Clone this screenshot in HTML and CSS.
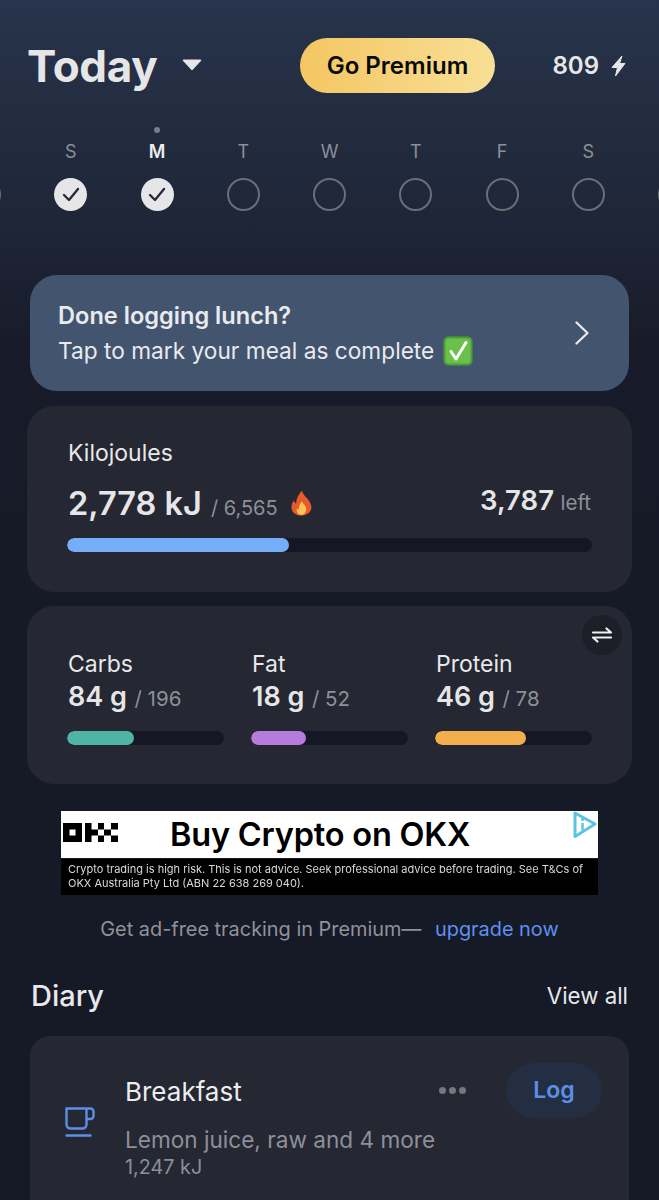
FILE: index.html
```html
<!DOCTYPE html>
<html lang="en">
<head>
<meta charset="utf-8">
<title>Today</title>
<link rel="stylesheet" href="styles.css">
</head>
<body>
<div class="page">
  <header class="top">
    <div class="title-wrap">
      <h1 class="title">Today</h1>
      <svg class="caret" width="20" height="13" viewBox="0 0 20 13"><path d="M1.500 1.500h17a.8.8 0 0 1 .6 1.300l-8.400 9a1 1 0 0 1-1.400 0l-8.400-9a.8.8 0 0 1 .6-1.300z" fill="#e6e6e8"/></svg>
    </div>
    <div class="premium">Go Premium</div>
    <div class="streak">
      <span>809</span>
      <svg width="15" height="22" viewBox="0 0 15 22"><path d="M11 1 1 12.500h5.500L4.500 21 14 8.500H8.500z" fill="#e6e6e8" stroke="#e6e6e8" stroke-width="1" stroke-linejoin="round"/></svg>
    </div>
  </header>

  <div class="week">
    <div class="day"><span class="dot-slot"></span><span class="letter"></span><span class="ring"></span></div>
    <div class="day"><span class="dot-slot"></span><span class="letter">S</span><span class="ring done"><svg width="18" height="15" viewBox="0 0 18 15"><path d="M2 8l5 5 9-11" fill="none" stroke="#252a38" stroke-width="2.300" stroke-linecap="round" stroke-linejoin="round"/></svg></span></div>
    <div class="day"><span class="dot-slot"><i class="today-dot"></i></span><span class="letter current">M</span><span class="ring done"><svg width="18" height="15" viewBox="0 0 18 15"><path d="M2 8l5 5 9-11" fill="none" stroke="#252a38" stroke-width="2.300" stroke-linecap="round" stroke-linejoin="round"/></svg></span></div>
    <div class="day"><span class="dot-slot"></span><span class="letter">T</span><span class="ring"></span></div>
    <div class="day"><span class="dot-slot"></span><span class="letter">W</span><span class="ring"></span></div>
    <div class="day"><span class="dot-slot"></span><span class="letter">T</span><span class="ring"></span></div>
    <div class="day"><span class="dot-slot"></span><span class="letter">F</span><span class="ring"></span></div>
    <div class="day"><span class="dot-slot"></span><span class="letter">S</span><span class="ring"></span></div>
    <div class="day"><span class="dot-slot"></span><span class="letter"></span><span class="ring"></span></div>
  </div>

  <section class="banner">
    <div>
      <div class="banner-title">Done logging lunch?</div>
      <div class="banner-sub">Tap to mark your meal as complete
        <svg class="check-emoji" width="30" height="30" viewBox="0 0 30 30"><rect x=".5" y=".5" width="29" height="29" rx="5" fill="#4f9f36"/><rect x="2.500" y="2.500" width="25" height="25" rx="3.500" fill="#69c04a"/><path d="M8 15.500l5 7.500L23 6.500" fill="none" stroke="#fff" stroke-width="3" stroke-linecap="round" stroke-linejoin="round"/></svg>
      </div>
    </div>
    <svg width="16" height="24" viewBox="0 0 16 24"><path d="M2.500 1.500 13.500 12 2.500 22.500" fill="none" stroke="#e8eaee" stroke-width="2.300" stroke-linecap="round" stroke-linejoin="round"/></svg>
  </section>

  <section class="card kj">
    <div class="label">Kilojoules</div>
    <div class="kj-row">
      <div class="kj-main">
        <span class="big">2,778 kJ</span>
        <span class="of">/ 6,565</span>
        <svg class="flame" width="23" height="26" viewBox="0 0 23 26"><path d="M12 .5c1 4.500 4 6 6.500 9.500 2.500 3.500 3.500 6.500 2.500 9.500-1 3.500-5 6-9.500 6S3 23.500 1.800 19.500C.8 15.500 2.500 12.500 4 10.500c.3 1.500 1 2.500 2.200 3C6 9 8.500 4.500 12 .5z" fill="#ea5a28"/><path d="M12 11c.5 2.500 2.500 3.500 3.800 6 1.200 3-.5 8-4.300 8s-5.500-4-4.500-7c.4 1 1 1.500 1.800 1.700C8.500 17 10 14 12 11z" fill="#fbc45a"/></svg>
      </div>
      <div class="kj-left"><span class="left-num">3,787</span> <span class="left-word">left</span></div>
    </div>
    <div class="track kj-track"><div class="fill" style="width:42.300%"></div></div>
  </section>

  <section class="card macros">
    <button class="swap" aria-label="Swap">
      <svg width="24" height="16" viewBox="0 0 24 16"><path d="M3 5.500h18L16.500 1.500M21 10.500H3l4.500 4" fill="none" stroke="#f0f0f2" stroke-width="2.200" stroke-linecap="round" stroke-linejoin="round"/></svg>
    </button>
    <div class="macro">
      <div class="label">Carbs</div>
      <div class="macro-val"><span class="mid">84 g</span> <span class="of">/ 196</span></div>
      <div class="track"><div class="fill teal" style="width:42.700%"></div></div>
    </div>
    <div class="macro">
      <div class="label">Fat</div>
      <div class="macro-val"><span class="mid">18 g</span> <span class="of">/ 52</span></div>
      <div class="track"><div class="fill purple" style="width:35%"></div></div>
    </div>
    <div class="macro">
      <div class="label">Protein</div>
      <div class="macro-val"><span class="mid">46 g</span> <span class="of">/ 78</span></div>
      <div class="track"><div class="fill orange" style="width:58%"></div></div>
    </div>
  </section>

  <aside class="ad">
    <div class="ad-top">
      <svg class="okx" width="55" height="20" viewBox="0 0 55 20"><path d="M0 0h19v19H0zM6.500 6.500v6h6v-6zM22 0h6.500v6.500H22zM22 6.500h6.500v6H22zM22 12.500h6.500V19H22zM28.500 6.500H35v6h-6.500zM35 0h6v6.500h-6zM35 12.500h6V19h-6zM41 6.500h7v6h-7zM48 0h7v6.500h-7zM48 12.500h7V19h-7z" fill="#000" fill-rule="evenodd"/></svg>
      <span class="ad-head">Buy Crypto on OKX</span>
      <svg class="ad-choice" width="24" height="28" viewBox="0 0 24 28"><path d="M2 2 22 13 2 25.500z" fill="none" stroke="#5cc3e3" stroke-width="3" stroke-linejoin="round"/><path d="M9.500 12v7" stroke="#5cc3e3" stroke-width="2.500"/><circle cx="9.500" cy="8.500" r="1.500" fill="#5cc3e3"/></svg>
    </div>
    <div class="ad-legal">Crypto trading is high risk. This is not advice. Seek professional advice before trading. See T&amp;Cs of OKX Australia Pty Ltd (ABN 22 638 269 040).</div>
  </aside>

  <p class="upsell">Get ad-free tracking in Premium— <a class="upgrade">upgrade now</a></p>

  <div class="diary-head">
    <h2>Diary</h2>
    <span>View all</span>
  </div>

  <section class="meal">
    <svg class="cup" width="30" height="30" viewBox="0 0 30 30"><path d="M1.500 1.500h20v16a4 4 0 0 1-4 4h-12a4 4 0 0 1-4-4zM21.500 1.500h4a3 3 0 0 1 3 3v4.500a3 3 0 0 1-3 3h-4M1.500 28.500h24" fill="none" stroke="#5d8fe6" stroke-width="2.400" stroke-linecap="round" stroke-linejoin="round"/></svg>
    <div class="meal-body">
      <div class="meal-top">
        <span class="meal-name">Breakfast</span>
        <span class="dots"><i></i><i></i><i></i></span>
        <span class="log">Log</span>
      </div>
      <div class="meal-items">Lemon juice, raw and 4 more</div>
      <div class="meal-kj">1,247 kJ</div>
    </div>
  </section>
</div>
</body>
</html>
```
FILE: styles.css
```css
* { box-sizing: border-box; }
html, body { margin: 0; height: 100%; }
body {
  background: #171a26;
  font-family: Inter, "Liberation Sans", sans-serif;
  color: #e6e6e8;
  overflow: hidden;
}
.page {
  height: 1200px;
  overflow: hidden;
  padding-top: 38px;
  background: linear-gradient(180deg, #27344b 0, #222c40 130px, #1e2536 230px, #181c2a 340px, #161926 600px);
}
.top {
  display: flex;
  align-items: center;
  height: 55px;
  padding: 0 33px 0 27px;
}
.title-wrap { display: flex; align-items: center; gap: 25px; width: 273px; }
.title { margin: 2px 0 0; font-size: 44px; font-weight: 700; line-height: 55px; letter-spacing: -0.3px; }
.caret { flex: none; margin-top: -2px; }
.premium {
  width: 195px;
  height: 55px;
  border-radius: 28px;
  background: linear-gradient(90deg, #f4c662, #f8df96);
  color: #0a0a0a;
  font-size: 24px;
  font-weight: 600;
  line-height: 55px;
  text-align: center;
}
.streak {
  margin-left: auto;
  display: flex;
  align-items: center;
  gap: 12px;
  font-size: 24px;
  font-weight: 600;
}
.week {
  display: flex;
  justify-content: center;
  margin-top: 34px;
  overflow: hidden;
}
.day {
  flex: 0 0 86.25px;
  display: flex;
  flex-direction: column;
  align-items: center;
}
.dot-slot { height: 8px; display: flex; justify-content: center; }
.today-dot { width: 6px; height: 6px; border-radius: 50%; background: #7b7e86; }
.letter {
  margin-top: 6px;
  height: 22px;
  font-size: 18px;
  line-height: 22px;
  color: #8d9098;
}
.letter.current { color: #eceded; font-weight: 600; }
.ring {
  margin-top: 15px;
  width: 33px;
  height: 33px;
  border-radius: 50%;
  border: 2.500px solid #6a6e76;
  display: flex;
  align-items: center;
  justify-content: center;
}
.ring.done { border: 0; background: #e6e6e8; }
.banner {
  margin: 64px 30px 0;
  height: 116px;
  padding: 0 39px 0 28px;
  border-radius: 27px;
  background: #43546f;
  display: flex;
  align-items: center;
  justify-content: space-between;
}
.banner-title { font-size: 23.600px; font-weight: 600; line-height: 30px; color: #e8eaee; }
.banner-sub {
  display: flex;
  align-items: center;
  gap: 9px;
  margin-top: 5px;
  font-size: 22.700px;
  line-height: 30px;
  color: #e8eaee;
}
.card { background: #252732; border-radius: 27px; margin: 0 27px; }
.label { font-size: 23px; line-height: 28px; color: #e8e8ea; }
.kj { margin-top: 15px; height: 186px; padding: 33px 41px 0 41px; }
.kj-row {
  display: flex;
  align-items: center;
  justify-content: space-between;
  margin-top: 13px;
  height: 46px;
}
.kj-main { display: flex; align-items: baseline; gap: 9px; }
.big { font-size: 32.500px; font-weight: 600; }
.of { font-size: 20px; color: #8d9098; }
.flame { align-self: center; margin-left: 3px; }
.kj-left { margin-top: -6px; }
.left-num { font-size: 27.500px; font-weight: 600; }
.left-word { font-size: 20.500px; color: #8d9098; margin-left: 2px; }
.track {
  height: 14px;
  border-radius: 7px;
  background: #151824;
  overflow: hidden;
}
.kj-track { margin-top: 12px; margin-left: -1px; margin-right: -1px; }
.fill { height: 100%; border-radius: 7px; background: #74aef8; }
.teal { background: #4fb3a5; }
.purple { background: #b77bdc; }
.orange { background: #f4ad4d; }
.macros {
  position: relative;
  margin-top: 14px;
  height: 178px;
  padding: 44px 40px 0 40px;
  display: grid;
  grid-template-columns: repeat(3, 157px);
  column-gap: 27px;
}
.macro .label { margin-left: 1px; }
.swap {
  position: absolute;
  top: 9px;
  right: 10px;
  width: 40px;
  height: 40px;
  padding: 0;
  border: 0;
  border-radius: 50%;
  background: #1c1e28;
  display: flex;
  align-items: center;
  justify-content: center;
}
.macro-val { margin-left: 1px; height: 38px; line-height: 38px; }
.mid { font-size: 27px; font-weight: 600; }
.macro .of { margin-left: 3px; font-size: 20.500px; }
.macro .track { margin-top: 15px; }
.ad { margin: 27px 61px 0; }
.ad-top {
  position: relative;
  height: 47px;
  background: #fff;
  display: flex;
  align-items: center;
  color: #000;
}
.okx { margin: -3px 0 0 2px; flex: none; }
.ad-head { margin-left: 52px; font-size: 32.500px; font-weight: 600; letter-spacing: -0.2px; }
.ad-choice { position: absolute; top: 0; right: 1px; }
.ad-legal {
  margin-top: 1px;
  height: 36px;
  padding: 3px 6px 0 7px;
  background: #000;
  color: #d8d8d8;
  font-size: 11px;
  line-height: 14px;
  filter: blur(.4px);
}
.upsell {
  margin: 21px 0 0;
  text-align: center;
  font-size: 19.900px;
  line-height: 26px;
  color: #8f929b;
}
.upgrade { margin-left: 8px; color: #5f8ff0; }
.diary-head {
  display: flex;
  justify-content: space-between;
  align-items: center;
  margin: 35px 31px 0;
  height: 36px;
}
.diary-head h2 { margin: 0; font-size: 29px; font-weight: 500; color: #e8e8ea; }
.diary-head span { font-size: 22.300px; color: #e8e8ea; }
.meal {
  margin: 23px 30px 0;
  height: 200px;
  border-radius: 20px;
  background: #252732;
  display: flex;
  padding: 27px 27px 0 35px;
}
.cup { flex: none; margin-top: 44px; }
.meal-body { flex: 1; margin-left: 30px; }
.meal-top { display: flex; align-items: center; height: 55px; }
.meal-name { font-size: 26px; color: #ecedef; flex: 1; margin-top: 1px; }
.dots { display: flex; gap: 3px; margin-right: 40px; }
.dots i { width: 7px; height: 7px; border-radius: 50%; background: #75777f; }
.log {
  width: 96px;
  height: 55px;
  border-radius: 28px;
  background: #232e42;
  color: #5d8fe6;
  font-size: 23px;
  font-weight: 600;
  line-height: 55px;
  text-align: center;
}
.meal-items { margin-top: 9px; font-size: 22.600px; line-height: 26px; color: #8d9098; }
.meal-kj { margin-top: 2px; font-size: 19.800px; line-height: 24px; color: #8d9098; }
```
